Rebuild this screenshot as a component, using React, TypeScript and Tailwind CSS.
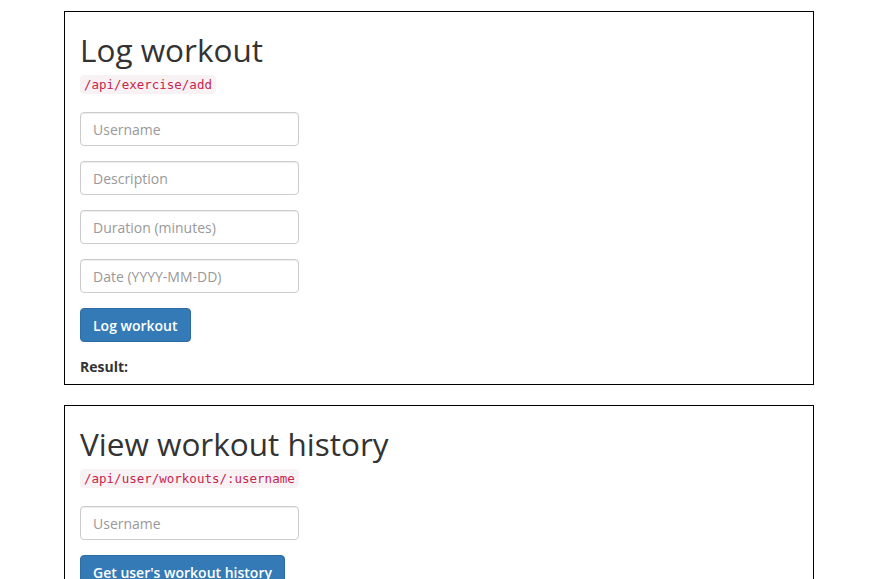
const sans = "font-['Open_Sans','Liberation_Sans',sans-serif]";

function Code({ children }: { children: string }) {
  return (
    <code className="rounded-[4px] bg-[#f9f2f4] px-[4px] py-[2px] font-['DejaVu_Sans_Mono',monospace] text-[12.5px] text-[#c7254e]">
      {children}
    </code>
  );
}

function Field({ placeholder }: { placeholder: string }) {
  return (
    <input
      type="text"
      placeholder={placeholder}
      className="block h-[34px] w-[219px] rounded-[4px] border border-[#cccccc] bg-white px-[12px] text-[14px] text-[#555] placeholder:text-[#999] shadow-[inset_0_1px_1px_rgba(0,0,0,0.075)] outline-none"
    />
  );
}

function Card({
  title,
  path,
  fields,
  action,
  result,
}: {
  title: string;
  path: string;
  fields: string[];
  action: string;
  result?: boolean;
}) {
  return (
    <section className="border border-black px-[15px] pb-[7px]">
      <h1 className="mt-[20px] mb-[7px] text-[31.5px] leading-[35px] font-normal text-[#333]">{title}</h1>
      <p className="mb-[17px] leading-[20px]">
        <Code>{path}</Code>
      </p>
      <div className="flex flex-col gap-[15px]">
        {fields.map((f) => (
          <Field key={f} placeholder={f} />
        ))}
        <div>
          <button className="h-[34px] rounded-[4px] border border-[#2e6da4] bg-[#337ab7] px-[12px] text-[14px] font-semibold text-white">
            {action}
          </button>
        </div>
      </div>
      {result ? <p className="mt-[15px] text-[14px] leading-[20px] font-bold text-[#333]">Result:</p> : null}
    </section>
  );
}

export default function App() {
  return (
    <div className={`${sans} min-h-[579px] bg-white pt-[11px] text-[14px] text-[#333]`}>
      <div className="ml-[64px] flex w-[750px] flex-col gap-[20px]">
        <Card
          title="Log workout"
          path="/api/exercise/add"
          fields={["Username", "Description", "Duration (minutes)", "Date (YYYY-MM-DD)"]}
          action="Log workout"
          result
        />
        <Card
          title="View workout history"
          path="/api/user/workouts/:username"
          fields={["Username"]}
          action="Get user's workout history"
          result
        />
      </div>
    </div>
  );
}
